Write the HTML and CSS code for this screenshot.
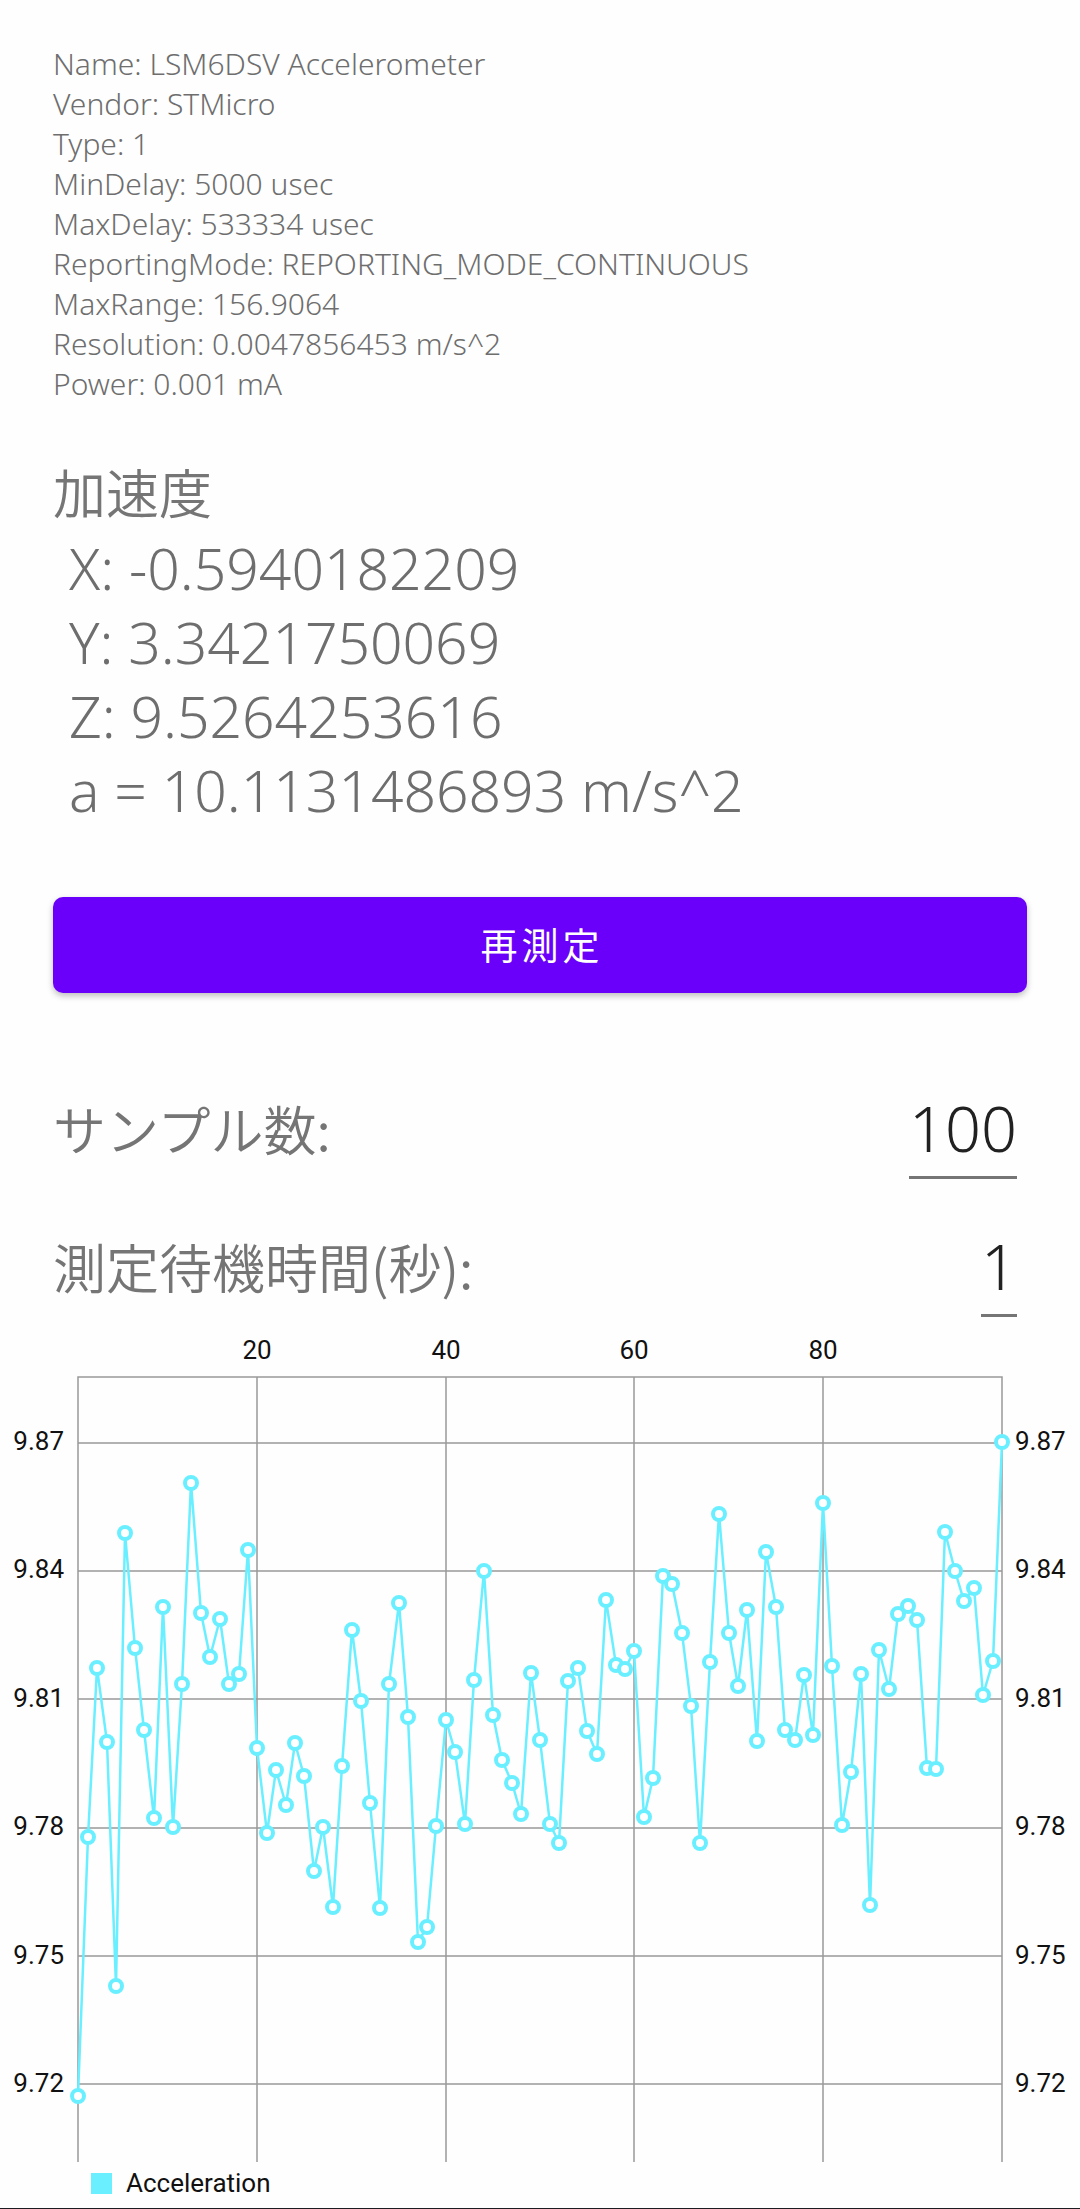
FILE: index.html
```html
<!DOCTYPE html>
<html lang="ja">
<head>
<meta charset="utf-8">
<meta name="viewport" content="width=device-width, initial-scale=1">
<title>加速度</title>
<link rel="stylesheet" href="styles.css">
</head>
<body>
<main class="page">
  <div class="content">
    <ul class="sensor-info">
      <li>Name: LSM6DSV Accelerometer</li>
      <li>Vendor: STMicro</li>
      <li>Type: 1</li>
      <li>MinDelay: 5000 usec</li>
      <li>MaxDelay: 533334 usec</li>
      <li>ReportingMode: REPORTING_MODE_CONTINUOUS</li>
      <li>MaxRange: 156.9064</li>
      <li>Resolution: 0.0047856453 m/s^2</li>
      <li>Power: 0.001 mA</li>
    </ul>
    <section class="reading">
      <h1 class="reading-title">加速度</h1>
      <ul class="reading-values">
        <li>X: -0.5940182209</li>
        <li>Y: 3.3421750069</li>
        <li>Z: 9.5264253616</li>
        <li>a = 10.1131486893 m/s^2</li>
      </ul>
    </section>
    <button class="measure-button" type="button">再測定</button>
    <form class="settings">
      <div class="field">
        <label class="field-label" for="samples">サンプル数:</label>
        <input class="field-input field-input-wide" id="samples" type="text" inputmode="numeric" value="100">
      </div>
      <div class="field">
        <label class="field-label" for="delay">測定待機時間(秒):</label>
        <input class="field-input" id="delay" type="text" inputmode="numeric" value="1">
      </div>
    </form>
  </div>
  <figure class="chart">
    <svg class="plot" viewBox="0 0 1080 842" role="img" aria-label="Acceleration">
      <defs>
        <marker id="dot" markerUnits="userSpaceOnUse" markerWidth="16" markerHeight="16" refX="8" refY="8">
          <circle class="dot" cx="8" cy="8" r="6"/>
        </marker>
      </defs>
      <g class="grid">
        <path d="M78 123H1002M78 251H1002M78 379H1002M78 508H1002M78 636H1002M78 764H1002"/>
        <path d="M257 57V842M446 57V842M634 57V842M823 57V842"/>
        <path d="M78 842V57H1002V842"/>
      </g>
      <g class="axis axis-top">
        <text x="257" y="39">20</text>
        <text x="446" y="39">40</text>
        <text x="634" y="39">60</text>
        <text x="823" y="39">80</text>
      </g>
      <g class="axis axis-left">
        <text x="64" y="130">9.87</text>
        <text x="64" y="258">9.84</text>
        <text x="64" y="387">9.81</text>
        <text x="64" y="515">9.78</text>
        <text x="64" y="644">9.75</text>
        <text x="64" y="772">9.72</text>
      </g>
      <g class="axis">
        <text x="1015" y="130">9.87</text>
        <text x="1015" y="258">9.84</text>
        <text x="1015" y="387">9.81</text>
        <text x="1015" y="515">9.78</text>
        <text x="1015" y="644">9.75</text>
        <text x="1015" y="772">9.72</text>
      </g>
      <polyline class="series" points="78,776 88,517 97,348 107,422 116,666 125,213 135,328 144,410 154,498 163,287
        173,507 182,364 191,163 201,293 210,337 220,299 229,364 239,354 248,230 257,428
        267,513 276,450 286,485 295,423 304,456 314,551 323,507 333,587 342,446 352,310
        361,381 370,483 380,588 389,364 399,283 408,397 418,622 427,607 436,506 446,400
        455,432 465,504 474,360 484,251 493,395 502,440 512,463 521,494 531,353 540,420
        550,504 559,523 568,361 578,348 587,411 597,434 606,280 616,345 625,349 634,331
        644,497 653,458 663,256 672,264 682,313 691,386 700,523 710,342 719,194 729,313
        738,366 747,290 757,421 766,232 776,287 785,410 795,420 804,355 813,415 823,183
        832,346 842,505 851,452 861,354 870,585 879,330 889,369 898,294 908,286 917,300
        927,448 936,449 945,212 955,251 964,281 974,268 983,375 993,341 1002,122"/>
    </svg>
    <figcaption class="legend"><span class="swatch"></span>Acceleration</figcaption>
  </figure>
</main>
</body>
</html>
```
FILE: styles.css
```css
* {
  box-sizing: border-box;
}

body {
  margin: 0;
  background: #fefefe;
  color: #6e6e6e;
  font-family: "Noto Sans", "Noto Sans CJK JP", sans-serif;
  font-weight: 350;
}

.page {
  border-bottom: 1px solid #1c1b1f;
}

.content {
  padding: 44px 53px 0;
}

.sensor-info,
.reading-values {
  margin: 0;
  padding: 0;
  list-style: none;
}

.sensor-info {
  font-size: 30px;
  line-height: 40px;
}

.reading {
  margin-top: 53px;
  font-size: 57px;
  line-height: 74px;
}

.reading-title {
  margin: 0;
  color: #757575;
  font-size: 53px;
  font-weight: 350;
  line-height: 74px;
}

.reading-values {
  padding-left: 16px;
}

.measure-button {
  display: block;
  width: 100%;
  height: 96px;
  margin-top: 70px;
  padding: 0 0 2px 4px;
  border: 0;
  border-radius: 10px;
  background: #6a00fa;
  box-shadow: 0 3px 6px rgba(0, 0, 0, 0.25);
  color: #fff;
  font: inherit;
  font-size: 37px;
  font-weight: 400;
  letter-spacing: 4px;
}

.settings {
  display: grid;
  gap: 44px;
  padding: 92px 10px 0 0;
}

.field {
  display: flex;
  align-items: flex-start;
  justify-content: space-between;
}

.field-label {
  color: #757575;
  font-family: "Noto Sans CJK JP", sans-serif;
  font-size: 53px;
  line-height: 86px;
}

.field-input {
  width: 1ch;
  height: 94px;
  padding: 0 0 6px;
  border: 0;
  border-bottom: 3px solid #757575;
  border-radius: 0;
  outline: 0;
  background: transparent;
  color: #212121;
  font: inherit;
  font-size: 63px;
  line-height: 80px;
  text-align: right;
}

.field-input-wide {
  width: 3ch;
}

.chart {
  margin: 3px 0 0;
  color: #111;
  font-family: Roboto, sans-serif;
  font-size: 26px;
  font-weight: 400;
}

.plot {
  display: block;
  width: 100%;
}

.grid {
  fill: none;
  stroke: #999;
  stroke-width: 1.5;
}

.axis {
  fill: #111;
}

.axis-top {
  text-anchor: middle;
}

.axis-left {
  text-anchor: end;
}

.series {
  fill: none;
  stroke: #69efff;
  stroke-width: 2.5;
  marker: url(#dot);
}

.dot {
  fill: #fff;
  stroke: #69efff;
  stroke-width: 4;
}

.legend {
  display: flex;
  align-items: center;
  gap: 14px;
  height: 46px;
  padding: 0 91px 4px;
}

.swatch {
  width: 21px;
  height: 21px;
  background: #69efff;
}
```
